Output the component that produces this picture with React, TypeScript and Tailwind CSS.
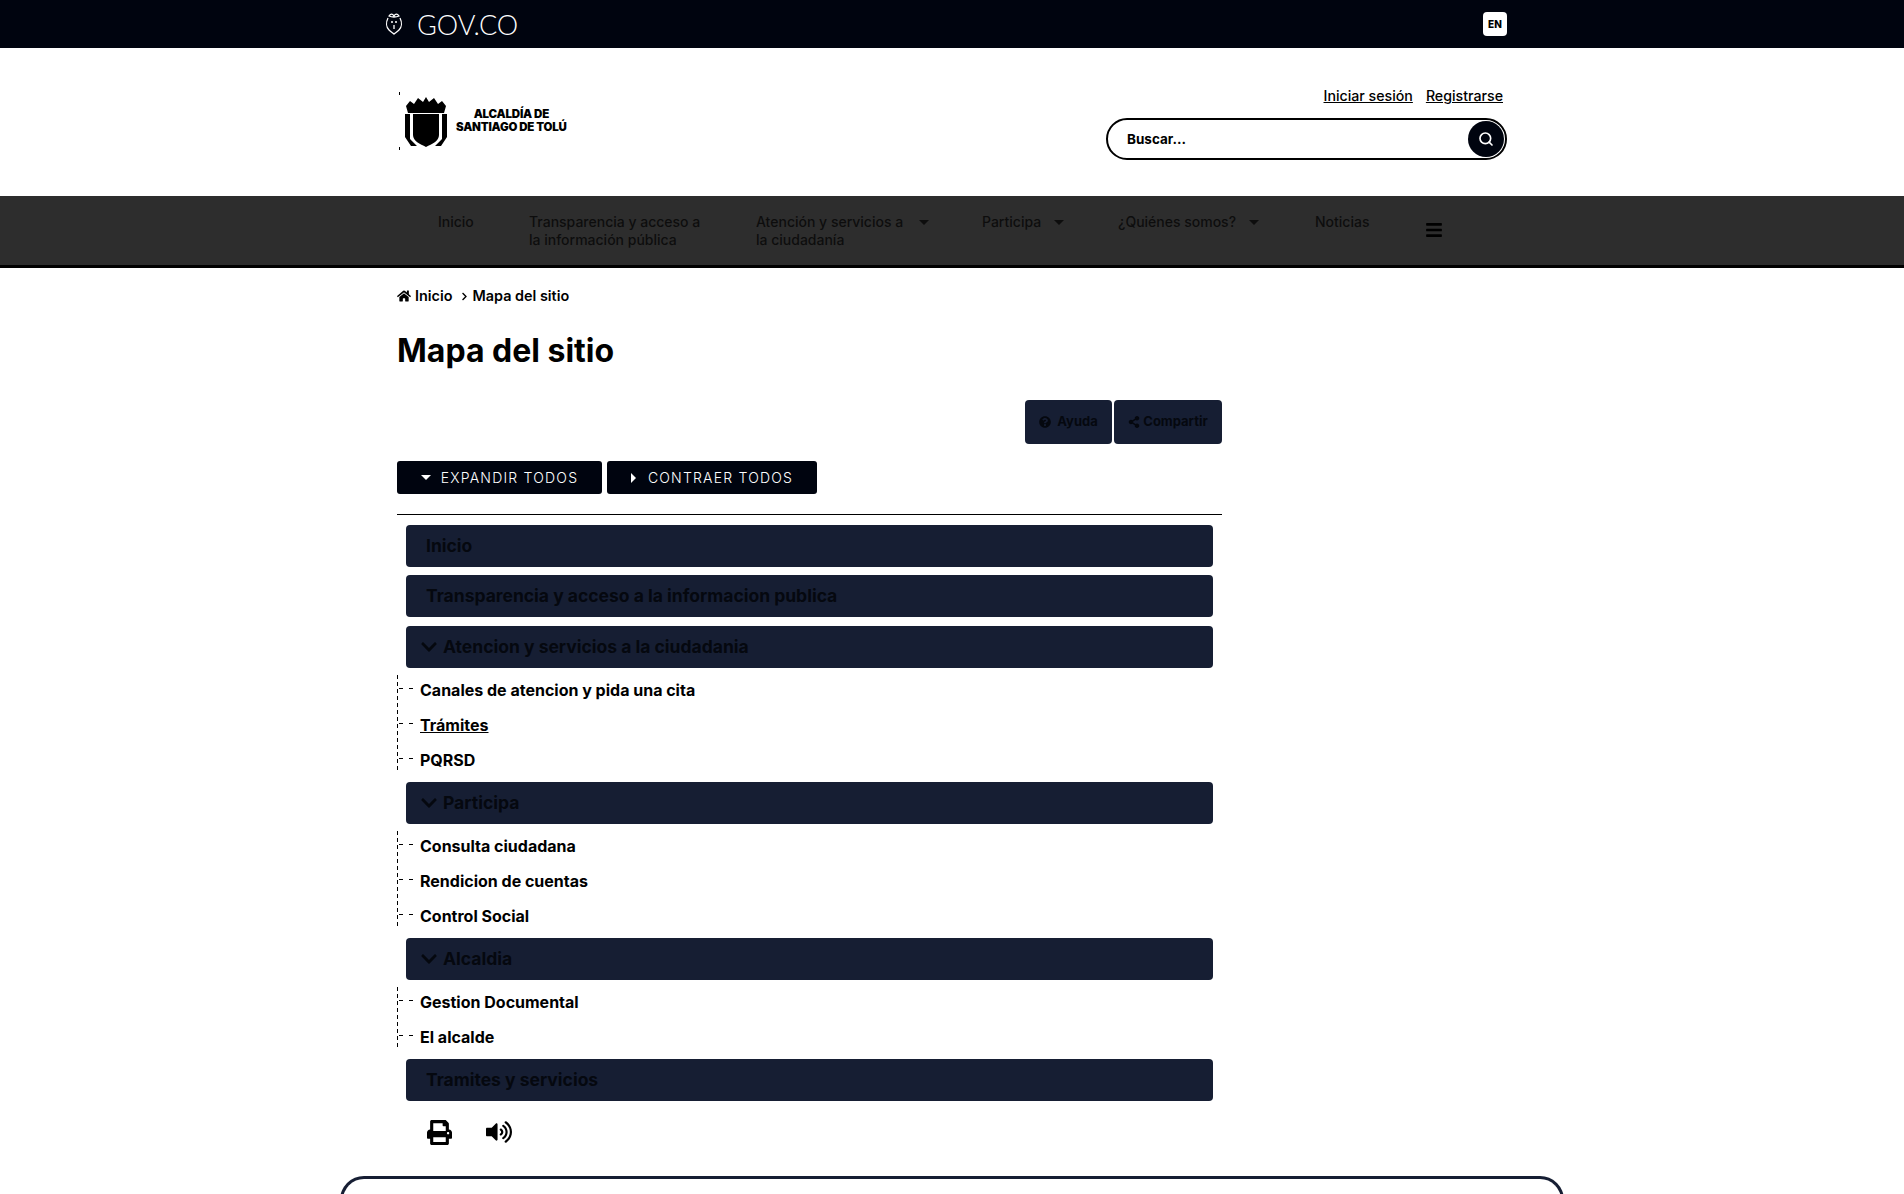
import { Search } from 'lucide-react';
import { FaBars, FaChevronDown, FaChevronRight, FaHome, FaPrint, FaQuestionCircle, FaShareAlt, FaVolumeUp } from 'react-icons/fa';

const navItems = [
  { label: 'Inicio', width: 'w-[91px]' },
  { label: 'Transparencia y acceso a la información pública', width: 'w-[227px]', textWidth: 'w-[176px]' },
  { label: 'Atención y servicios a la ciudadanía', width: 'w-[226px]', textWidth: 'w-[150px]', caret: true },
  { label: 'Participa', width: 'w-[136px]', caret: true },
  { label: '¿Quiénes somos?', width: 'w-[197px]', caret: true },
  { label: 'Noticias', width: 'w-[110px]' },
];

type Section = {
  title: string;
  open?: boolean;
  links?: { label: string; underline?: boolean }[];
};

const sections: Section[] = [
  { title: 'Inicio' },
  { title: 'Transparencia y acceso a la informacion publica' },
  {
    title: 'Atencion y servicios a la ciudadania',
    open: true,
    links: [
      { label: 'Canales de atencion y pida una cita' },
      { label: 'Trámites', underline: true },
      { label: 'PQRSD' },
    ],
  },
  {
    title: 'Participa',
    open: true,
    links: [
      { label: 'Consulta ciudadana' },
      { label: 'Rendicion de cuentas' },
      { label: 'Control Social' },
    ],
  },
  {
    title: 'Alcaldia',
    open: true,
    links: [{ label: 'Gestion Documental' }, { label: 'El alcalde' }],
  },
  { title: 'Tramites y servicios' },
];

function Caret() {
  return <span className="mt-[7px] h-0 w-0 border-x-[5px] border-t-[5px] border-x-transparent border-t-[#0d0d0d]" />;
}

function GovCrest() {
  return (
    <svg width="20" height="24" viewBox="0 0 20 24" fill="none" stroke="#ffffff" strokeWidth="1.3">
      <path d="M4 6c-2 4-2 9 1 12 2 2 4 3 5 4 1-1 3-2 5-4 3-3 3-8 1-12" />
      <path d="M5 4c2-3 4-2 5 0 1-2 3-3 5 0-2 1-3 1-5 1S7 5 5 4z" />
      <path d="M7 10h2M11 10h2M10 13v4" />
    </svg>
  );
}

function TownShield() {
  return (
    <svg width="50" height="58" viewBox="0 0 50 58" fill="#000000">
      <path d="M0 0h1v3H0zM0 55h1v3H0z" />
      <path d="M7 14l4-5 4 3 4-6 5 4 3-5 3 5 5-4 4 6 4-3 4 5-2 7H9z" />
      <path d="M6 22h5v25l7 7-6 0-6-9zM48 22h-5v25l-7 7 6 0 6-9z" />
      <path d="M14 22h26v21c0 6-7 9-13 12-6-3-13-6-13-12z" />
    </svg>
  );
}

export default function App() {
  return (
    <div className="h-[1194px] overflow-hidden bg-white font-['Inter',sans-serif] text-black">
      <div className="h-[48px] bg-[#00040f]">
        <div className="mx-auto flex h-full w-[1110px] items-center justify-between">
          <div className="-ml-[13px] flex items-center gap-[13px]">
            <GovCrest />
            <span className="font-['Lato',sans-serif] text-[27px] font-light leading-none text-white">GOV.CO</span>
          </div>
          <button className="flex h-[24px] w-[24px] items-center justify-center rounded-[4px] bg-white text-[10px] font-extrabold">EN</button>
        </div>
      </div>

      <header className="h-[148px]">
        <div className="mx-auto flex h-full w-[1110px] justify-between">
          <div className="flex items-center gap-[7px] pb-[2px] pl-[2px]">
            <TownShield />
            <div className="text-center text-[11.5px] font-black leading-[13px] tracking-[-0.2px]">
              <div>ALCALDÍA DE</div>
              <div>SANTIAGO DE TOLÚ</div>
            </div>
          </div>
          <div className="flex w-[401px] flex-col pt-[38px]">
            <div className="flex justify-end gap-[13px] pr-[4px] text-[14.2px] font-medium leading-[20px]">
              <a className="underline">Iniciar sesión</a>
              <a className="underline">Registrarse</a>
            </div>
            <div className="mt-[12px] flex h-[42px] items-center justify-between rounded-full border-2 border-black pl-[19px] pr-[1px]">
              <span className="text-[13.5px] font-bold">Buscar...</span>
              <span className="flex h-[36px] w-[36px] items-center justify-center rounded-full bg-[#00040f] text-white">
                <Search size={16} strokeWidth={2.5} />
              </span>
            </div>
          </div>
        </div>
      </header>

      <nav className="h-[72px] border-b-[3px] border-black bg-[#2d2d2d]">
        <div className="mx-auto flex h-full w-[1110px] pl-[41px] pt-[17px] text-[14px] font-medium leading-[18px] text-[#0d0d0d]">
          {navItems.map((item) => (
            <div key={item.label} className={`flex shrink-0 items-start gap-[13px] ${item.width}`}>
              <span className={item.textWidth}>{item.label}</span>
              {item.caret && <Caret />}
            </div>
          ))}
          <FaBars size={18} className="mt-[8px] shrink-0 text-black" />
        </div>
      </nav>

      <main className="mx-auto w-[1110px]">
        <div className="w-[825px]">
          <div className="flex h-[56px] items-center text-[14.4px] font-semibold">
            <FaHome size={14} />
            <span className="ml-[4px]">Inicio</span>
            <FaChevronRight size={9} className="ml-[8px]" />
            <span className="ml-[3px]">Mapa del sitio</span>
          </div>
          <h1 className="mt-[7px] text-[32px] font-bold leading-[40px]">Mapa del sitio</h1>

          <div className="mt-[29px] flex justify-end gap-[2px]">
            <button className="flex h-[44px] w-[87px] items-center justify-center gap-[6px] rounded-[4px] bg-[#161e33] text-[13px] font-bold text-[#05080f]">
              <FaQuestionCircle size={12} />
              Ayuda
            </button>
            <button className="flex h-[44px] w-[108px] items-center justify-center gap-[3px] rounded-[4px] bg-[#161e33] text-[13px] font-bold text-[#05080f]">
              <FaShareAlt size={12} />
              Compartir
            </button>
          </div>

          <div className="mt-[17px] flex gap-[5px]">
            <button className="flex h-[33px] w-[205px] items-center justify-center gap-[10px] rounded-[3px] bg-[#00040f] text-[14px] font-light tracking-[1.2px] text-white">
              <span className="h-0 w-0 border-x-[5px] border-t-[5px] border-x-transparent border-t-white" />
              EXPANDIR TODOS
            </button>
            <button className="flex h-[33px] w-[210px] items-center justify-center gap-[12px] rounded-[3px] bg-[#00040f] text-[14px] font-light tracking-[1.2px] text-white">
              <span className="h-0 w-0 border-y-[5px] border-l-[5px] border-y-transparent border-l-white" />
              CONTRAER TODOS
            </button>
          </div>

          <hr className="mt-[20px] border-t border-black" />

          <div className="mt-[10px] pr-[9px] pl-[9px]">
            {sections.map((section) => (
              <div key={section.title}>
                <div className="flex h-[42px] items-center rounded-[4px] bg-[#161e33] text-[17.5px] font-bold text-[#05080f]">
                  {section.open ? (
                    <span className="flex items-center gap-[5px] pl-[14px]">
                      <FaChevronDown size={18} />
                      {section.title}
                    </span>
                  ) : (
                    <span className="pl-[20px]">{section.title}</span>
                  )}
                </div>
                {section.links ? (
                  <ul className={`-ml-[9px] mt-[7px] mb-[9px] bg-[repeating-linear-gradient(to_bottom,#000_0,#000_4px,transparent_4px,transparent_7px)] bg-[length:1px_100%] bg-no-repeat ${section.links.length === 3 ? 'h-[98px]' : 'h-[63px]'}`}>
                    {section.links.map((link) => (
                      <li key={link.label} className="flex h-[35px] items-start">
                        <span className="ml-[2px] mt-[13px] flex gap-[6px]">
                          <span className="h-px w-[4px] bg-black" />
                          <span className="h-px w-[4px] bg-black" />
                        </span>
                        <span className={`ml-[7px] text-[16px] font-bold leading-[30px] ${link.underline ? 'underline' : ''}`}>{link.label}</span>
                      </li>
                    ))}
                  </ul>
                ) : (
                  <div className={section.title === 'Inicio' ? 'h-[8px]' : 'h-[9px]'} />
                )}
              </div>
            ))}
          </div>

          <div className="mt-[9px] flex items-center gap-[34px] pl-[30px]">
            <FaPrint size={25} />
            <FaVolumeUp size={26} />
          </div>
        </div>
      </main>

      <footer className="mx-auto mt-[31px] h-[200px] w-[1224px] rounded-t-[24px] border-[3px] border-b-0 border-[#161e33]" />
    </div>
  );
}
